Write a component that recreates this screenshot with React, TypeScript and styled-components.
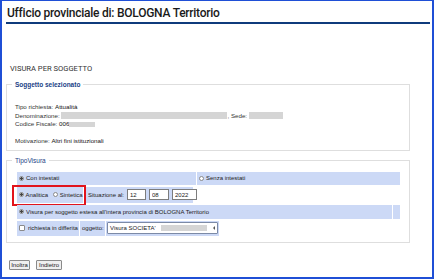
import React from 'react';
import styled, { createGlobalStyle } from 'styled-components';

const GlobalStyle = createGlobalStyle`
  html, body { margin: 0; padding: 0; background: #fff; }
  body { font-family: "Liberation Sans", Arial, sans-serif; color: #222; }
  * { box-sizing: border-box; }
`;

const Page = styled.div`
  width: 434px;
  height: 279px;
  border: 2px solid #1f4fd6;
  border-top-width: 1px;
  background: #fff;
  overflow: hidden;
`;

const Header = styled.h1`
  margin: 0 2px 0 4px;
  padding: 5px 0 2px 1px;
  border-bottom: 2px solid #0f3b7c;
  font: 500 12px/14px Roboto, sans-serif;
  letter-spacing: -0.25px;
  color: #1a1a1a;
`;

const Content = styled.div`
  padding-left: 4px;
`;

const PageTitle = styled.h2`
  margin: 41px 0 0 4px;
  font: 400 7.6px/8px Roboto, sans-serif;
  color: #333;
  text-transform: uppercase;
`;

const Box = styled.fieldset<{ $top: number }>`
  margin: ${p => p.$top}px 0 0 0;
  width: 404px;
  min-width: 0;
  padding: 0 0 0 5px;
  border: 1px solid #dedede;
`;

const Legend = styled.legend<{ $bold?: boolean }>`
  padding: 0 3px;
  font: ${p => (p.$bold ? 700 : 400)} 6.5px/9px "Liberation Sans", sans-serif;
  color: #1b3f86;
`;

const Info = styled.div`
  padding: 14px 0 4px 3px;
  font-size: 6.2px;
  line-height: 8.5px;
  color: #333;
`;

const Line = styled.div`
  height: 8.5px;
  white-space: nowrap;
  display: flex;
  align-items: center;
`;

const Value = styled.span`
  color: #111;
  white-space: pre;
`;

const Redacted = styled.span<{ $w: number; $h?: number }>`
  display: inline-block;
  flex: none;
  width: ${p => p.$w}px;
  height: ${p => p.$h ?? 7}px;
  background: #d5d5d5;
`;

const Rows = styled.div`
  padding: 7px 0 6px 5px;
  display: flex;
  flex-direction: column;
  gap: 2px;
`;

const Row = styled.div<{ $h: number; $gap?: number }>`
  position: relative;
  display: flex;
  height: ${p => p.$h}px;
  gap: ${p => p.$gap ?? 1}px;
`;

const Cell = styled.div<{ $w: number; $pad?: number; $tight?: boolean }>`
  width: ${p => p.$w}px;
  flex: none;
  display: flex;
  align-items: center;
  gap: ${p => (p.$tight ? 1.5 : 2)}px;
  padding-left: ${p => p.$pad ?? 2}px;
  background: #ccd9f6;
  font-size: 6px;
  color: #222;
  white-space: nowrap;
`;

const Radio = styled.span<{ $checked?: boolean }>`
  width: 5px;
  height: 5px;
  flex: none;
  border-radius: 50%;
  border: 1px solid #8a8a8a;
  background: ${p =>
    p.$checked ? 'radial-gradient(circle, #444 0 1px, #fff 1.6px)' : '#fff'};
`;

const Check = styled.span`
  width: 6px;
  height: 6px;
  flex: none;
  border: 1px solid #8a8a8a;
  border-radius: 1px;
  background: #fff;
  margin-right: 1px;
`;

const Spacer = styled.span`
  width: 2px;
  flex: none;
`;

const Highlight = styled.div`
  position: absolute;
  left: -5px;
  top: -2px;
  width: 74px;
  height: 21px;
  border: 2px solid #e2141c;
  pointer-events: none;
`;

const DateInput = styled.input<{ $w: number }>`
  width: ${p => p.$w}px;
  height: 11px;
  padding: 0 2px;
  border: 1px solid #7d7d7d;
  font: 6px "Liberation Sans", sans-serif;
  color: #222;
  background: #fff;
  margin-left: 1px;
`;

const SelectBox = styled.div`
  width: 111px;
  height: 12px;
  display: flex;
  align-items: center;
  gap: 5px;
  padding: 0 2px;
  border: 1px solid #7c8aa6;
  border-radius: 1px;
  background: #fff;
  font-size: 6px;
  color: #222;
  overflow: hidden;
`;

const Arrow = styled.span`
  margin-left: auto;
  width: 0;
  height: 0;
  flex: none;
  border-top: 2px solid transparent;
  border-bottom: 2px solid transparent;
  border-right: 2px solid #555;
`;

const Footer = styled.div`
  margin: 17px 0 0 3px;
  display: flex;
  gap: 6px;
`;

const Button = styled.button<{ $w: number }>`
  width: ${p => p.$w}px;
  height: 10px;
  padding: 0;
  border: 1px solid #8a8a8a;
  border-radius: 1px;
  background: #efefef;
  font: 6px "Liberation Sans", sans-serif;
  color: #222;
`;

export default function App() {
  return (
    <>
      <GlobalStyle />
      <Page>
        <Header>Ufficio provinciale di: BOLOGNA Territorio</Header>
        <Content>
          <PageTitle>Visura per soggetto</PageTitle>

          <Box $top={7}>
            <Legend $bold>Soggetto selezionato</Legend>
            <Info>
              <Line>
                Tipo richiesta:&nbsp;<Value>Attualità</Value>
              </Line>
              <Line>
                Denominazione:&nbsp;<Redacted $w={166} />, Sede:&nbsp;<Redacted $w={34} />
              </Line>
              <Line>
                Codice Fiscale:&nbsp;<Value>006</Value>
                <Redacted $w={26} $h={5} />
              </Line>
              <Line />
              <Line>
                Motivazione:&nbsp;<Value>Altri fini istituzionali</Value>
              </Line>
            </Info>
          </Box>

          <Box $top={5}>
            <Legend>TipoVisura</Legend>
            <Rows>
              <Row $h={13}>
                <Cell $w={179}>
                  <Radio $checked />
                  Con intestati
                </Cell>
                <Cell $w={203}>
                  <Radio />
                  Senza intestati
                </Cell>
              </Row>

              <Row $h={16} $gap={3}>
                <Cell $w={66} $tight>
                  <Radio $checked />
                  Analitica
                  <Spacer />
                  <Radio />
                  Sintetica
                </Cell>
                <Cell $w={107}>
                  Situazione al:
                  <DateInput $w={19} defaultValue="12" />
                  <DateInput $w={20} defaultValue="08" />
                  <DateInput $w={25} defaultValue="2022" />
                </Cell>
                <Highlight />
              </Row>

              <Row $h={14}>
                <Cell $w={375}>
                  <Radio $checked />
                  Visura per soggetto estesa all'intera provincia di BOLOGNA Territorio
                </Cell>
                <Cell $w={7} />
              </Row>

              <Row $h={15}>
                <Cell $w={62}>
                  <Check />
                  richiesta in differita
                </Cell>
                <Cell $w={25}>oggetto:</Cell>
                <Cell $w={113} $pad={1}>
                  <SelectBox>
                    Visura SOCIETA'
                    <Redacted $w={46} $h={6} />
                    <Arrow />
                  </SelectBox>
                </Cell>
              </Row>
            </Rows>
          </Box>

          <Footer>
            <Button $w={21}>Inoltra</Button>
            <Button $w={26}>Indietro</Button>
          </Footer>
        </Content>
      </Page>
    </>
  );
}
